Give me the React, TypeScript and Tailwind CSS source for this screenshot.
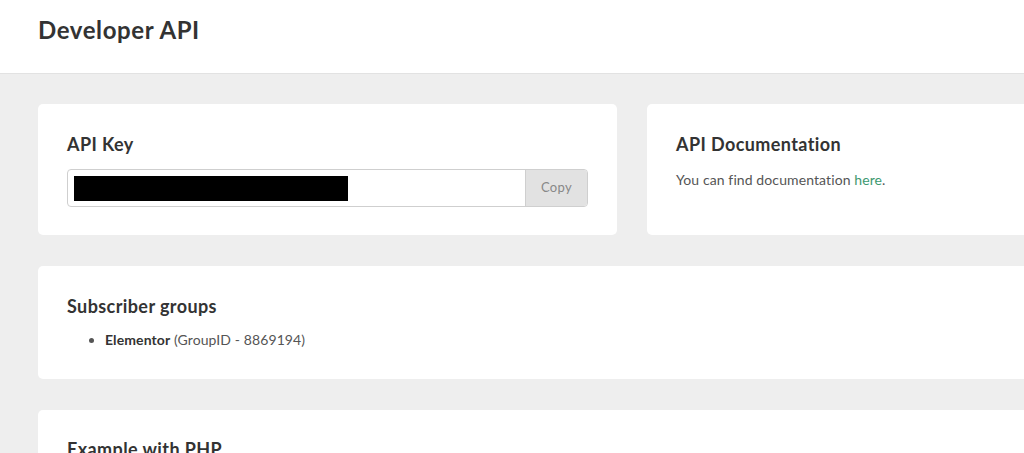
import React from 'react';

const Card: React.FC<{ className?: string; children: React.ReactNode }> = ({ className = '', children }) => (
  <div className={`rounded-[5px] bg-white px-[29px] ${className}`}>{children}</div>
);

const App: React.FC = () => {
  return (
    <div className="h-screen w-full overflow-hidden bg-[#eeeeee] font-['Lato',sans-serif] text-[#333333]">
      <div className="w-[1264px]">
        {/* Page header */}
        <header className="flex h-[74px] items-center border-b border-[#e2e2e2] bg-white px-[38px] pb-[14px]">
          <h1 className="text-[24px] font-bold tracking-[0.6px]">Developer API</h1>
        </header>

        <main className="flex flex-col gap-[31px] px-[38px] pt-[30px]">
          <div className="grid grid-cols-[579px_579px] gap-[30px]">
            {/* API key */}
            <Card className="h-[131px] pt-[28px]">
              <h2 className="text-[18px] font-bold leading-[24px] tracking-[0.4px]">API Key</h2>
              <div className="mt-[13px] flex h-[38px] w-[521px] overflow-hidden rounded-[4px] border border-[#cfcfcf]">
                <div className="flex flex-1 items-center pl-[6px]">
                  <div className="h-[25px] w-[274px] bg-black" />
                </div>
                <button className="w-[62px] border-l border-[#cfcfcf] bg-[#e2e2e2] text-[13px] tracking-[0.3px] text-[#888888]">
                  Copy
                </button>
              </div>
            </Card>

            {/* Documentation link */}
            <Card className="h-[131px] pt-[28px]">
              <h2 className="text-[18px] font-bold leading-[24px] tracking-[0.4px]">API Documentation</h2>
              <p className="mt-[13px] text-[14px] tracking-[0.1px] text-[#555555]">
                You can find documentation <a className="text-[#3d9970]" href="#">here</a>.
              </p>
            </Card>
          </div>

          {/* Groups */}
          <Card className="h-[113px] w-[1188px] pt-[28px]">
            <h2 className="text-[18px] font-bold leading-[24px] tracking-[0.4px]">Subscriber groups</h2>
            <ul className="mt-[11px] list-disc pl-[38px] text-[14px] tracking-[0.1px] text-[#555555]">
              <li>
                <span className="font-bold text-[#333333]">Elementor</span> (GroupID - 8869194)
              </li>
            </ul>
          </Card>

          <Card className="h-[120px] w-[1188px] pt-[27px]">
            <h2 className="text-[18px] font-bold leading-[24px] tracking-[0.4px]">Example with PHP</h2>
          </Card>
        </main>
      </div>
    </div>
  );
};

export default App;
